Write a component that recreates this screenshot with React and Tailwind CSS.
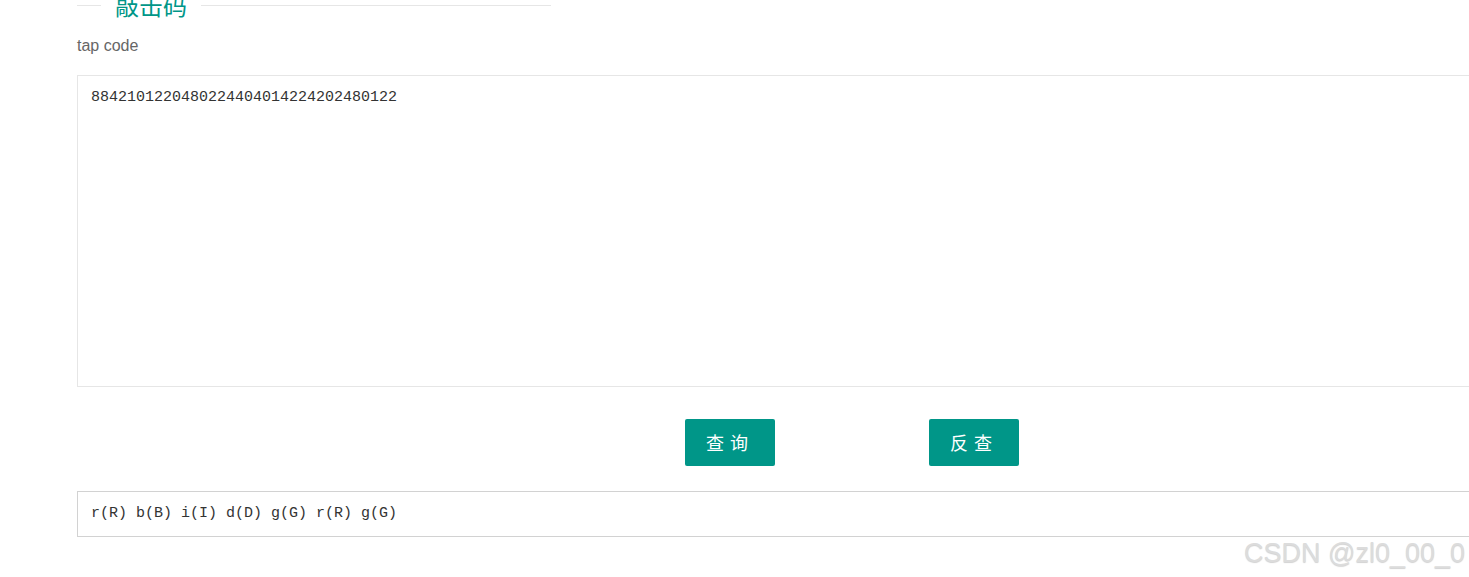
export default function App() {
  return (
    <div className="w-full h-[577px] overflow-hidden bg-white relative font-['Liberation_Sans','Noto_Sans_CJK_SC',sans-serif]">
      <div className="pl-[77px] w-[1600px]">
        {/* legend */}
        <div className="flex items-center w-[474px] -mt-[7px] h-[24px]">
          <div className="w-[24px] h-px bg-[#e6e6e6]" />
          <div className="px-[14px] text-[24px] leading-[24px] text-[#009688] font-['Noto_Sans_CJK_SC',sans-serif]">敲击码</div>
          <div className="flex-1 h-px bg-[#e6e6e6]" />
        </div>
        <div className="mt-[19px] text-[16px] leading-[20px] text-[#666]">tap code</div>
        <div className="mt-[19px] h-[312px] border border-[#e6e6e6] px-[13px] pt-[12px] text-[15px] leading-[20px] text-[#333] font-['Liberation_Mono',monospace]">
          8842101220480224404014224202480122
        </div>
        <div className="flex mt-[32px] pl-[608px] gap-[154px]">
          <button className="w-[90px] h-[47px] bg-[#009688] text-white text-[18px] rounded-[2px] tracking-[6px] font-['Noto_Sans_CJK_SC',sans-serif]">查询</button>
          <button className="w-[90px] h-[47px] bg-[#009688] text-white text-[18px] rounded-[2px] tracking-[6px] font-['Noto_Sans_CJK_SC',sans-serif]">反查</button>
        </div>
        <div className="mt-[25px] h-[46px] border border-[#d2d2d2] pl-[13px] flex items-center text-[15px] text-[#333] font-['Liberation_Mono',monospace]">
          r(R) b(B) i(I) d(D) g(G) r(R) g(G)
        </div>
      </div>
      <div className="absolute right-[4px] bottom-[8px] text-[27px] leading-[32px] text-[#dcdcdc] [text-shadow:0_1px_1px_rgba(0,0,0,0.18)]">CSDN @zl0_00_0</div>
    </div>
  );
}
